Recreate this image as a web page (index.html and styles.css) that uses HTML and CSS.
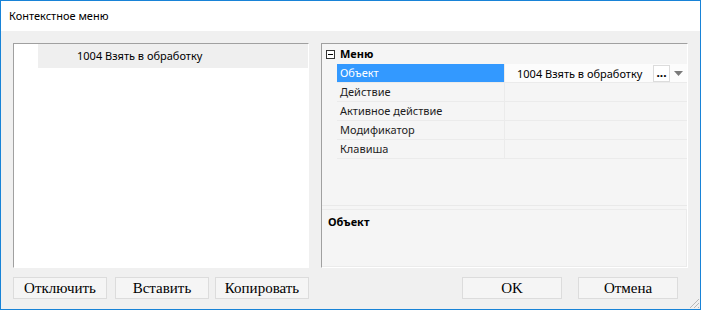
FILE: index.html
```html
<!DOCTYPE html>
<html lang="ru">
<head>
<meta charset="utf-8">
<title>Контекстное меню</title>
<link rel="stylesheet" href="styles.css">
</head>
<body>
<div class="window">
  <div class="titlebar">Контекстное меню</div>
  <div class="content">
    <div class="panels">
      <div class="listbox">
        <div class="list-item">1004 Взять в обработку</div>
      </div>
      <div class="propgrid">
        <div class="grid-rows">
          <div class="category">
            <span class="expander"><svg width="9" height="9" viewBox="0 0 9 9"><rect x="0.5" y="0.5" width="8" height="8" fill="#fff" stroke="#333"/><line x1="2" y1="4.5" x2="7" y2="4.5" stroke="#000"/></svg></span>
            <span class="cat-name">Меню</span>
          </div>
          <div class="prop selected">
            <div class="pname">Объект</div>
            <div class="pvalue">
              <span class="vtext">1004 Взять в обработку</span>
              <span class="ellipsis">...</span>
              <span class="drop"><svg width="9" height="5" viewBox="0 0 9 5"><polygon points="0,0 9,0 4.5,5" fill="#7a7a7a"/></svg></span>
            </div>
          </div>
          <div class="prop"><div class="pname">Действие</div><div class="pvalue"></div></div>
          <div class="prop"><div class="pname">Активное действие</div><div class="pvalue"></div></div>
          <div class="prop"><div class="pname">Модификатор</div><div class="pvalue"></div></div>
          <div class="prop"><div class="pname">Клавиша</div><div class="pvalue"></div></div>
        </div>
        <div class="description">
          <div class="desc-title">Объект</div>
        </div>
      </div>
    </div>
    <div class="buttons">
      <div class="btn-group left">
        <button class="btn b1">Отключить</button>
        <button class="btn b2">Вставить</button>
        <button class="btn b3">Копировать</button>
      </div>
      <div class="btn-group right">
        <button class="btn wide">OK</button>
        <button class="btn wide b5">Отмена</button>
      </div>
    </div>
    <div class="grip"><svg width="12" height="12" viewBox="0 0 12 12"><g fill="#b8b8b8"><rect x="10" y="2" width="1" height="1"/><rect x="9" y="3" width="1" height="1"/><rect x="8" y="4" width="1" height="1"/><rect x="7" y="5" width="1" height="1"/><rect x="6" y="6" width="1" height="1"/><rect x="5" y="7" width="1" height="1"/><rect x="4" y="8" width="1" height="1"/><rect x="3" y="9" width="1" height="1"/><rect x="2" y="10" width="1" height="1"/><rect x="10" y="6" width="1" height="1"/><rect x="9" y="7" width="1" height="1"/><rect x="8" y="8" width="1" height="1"/><rect x="7" y="9" width="1" height="1"/><rect x="6" y="10" width="1" height="1"/><rect x="10" y="10" width="1" height="1"/></g></svg></div>
  </div>
</div>
</body>
</html>
```
FILE: styles.css
```css
* { box-sizing: border-box; }
html, body { margin: 0; padding: 0; background: #fff; }
body {
  font-family: "Segoe UI", "Noto Sans", "Liberation Sans", sans-serif;
  font-size: 11px;
  color: #000;
}
.window {
  width: 701px;
  height: 310px;
  border: 1px solid #1883d7;
  display: flex;
  flex-direction: column;
  background: #f0f0f0;
}
.titlebar {
  height: 30px;
  background: #fff;
  padding-left: 8px;
  line-height: 30px;
  font-size: 11px;
  color: #000;
  flex: none;
}
.content {
  position: relative;
  flex: 1;
  padding: 12px 12px 0 12px;
  display: flex;
  flex-direction: column;
}
.panels {
  display: flex;
  gap: 12px;
  height: 225px;
}
.listbox {
  width: 296px;
  background: #fff;
  border-top: 1px solid #a0a0a0;
  border-left: 1px solid #a0a0a0;
  border-right: 1px solid #fff;
  border-bottom: 1px solid #fff;
}
.list-item {
  margin-left: 24px;
  height: 24px;
  background: #efefef;
  padding-left: 39px;
  line-height: 24px;
  white-space: nowrap;
}
.propgrid {
  width: 367px;
  background: #f5f5f5;
  border-top: 1px solid #a0a0a0;
  border-left: 1px solid #a0a0a0;
  border-right: 1px solid #fff;
  border-bottom: 1px solid #fff;
  display: flex;
  flex-direction: column;
}
.grid-rows {
  height: 162px;
  border-bottom: 1px solid #e9e9e9;
  flex: none;
}
.category {
  height: 20px;
  display: flex;
  align-items: center;
  padding-left: 4px;
  gap: 5px;
}
.expander { display: flex; }
.cat-name { font-weight: bold; line-height: 18px; }
.prop {
  display: flex;
  height: 19px;
  margin-left: 15px;
  border-bottom: 1px solid #ebebeb;
}
.pname {
  width: 168px;
  padding-left: 3px;
  line-height: 18px;
  border-right: 1px solid #ebebeb;
  color: #1e1e1e;
  white-space: nowrap;
}
.pvalue {
  flex: 1;
  display: flex;
  align-items: center;
  white-space: nowrap;
}
.prop.selected .pname {
  background: #3399ff;
  color: #fff;
}
.prop.selected .pvalue { background: #fcfcfc; }
.vtext { margin-left: 12px; flex: 1; }
.ellipsis {
  width: 17px;
  height: 17px;
  border: 1px solid #dcdcdc;
  background: #fff;
  font-weight: bold;
  font-size: 12px;
  line-height: 12px;
  display: flex;
  justify-content: center;
  align-items: flex-end;
  padding-bottom: 2px;
}
.drop {
  width: 17px;
  display: flex;
  justify-content: center;
  align-items: center;
}
.description {
  flex: 1;
  margin-top: 3px;
  border: 1px solid #ebebeb;
  border-left: none;
  padding: 4px 6px;
}
.desc-title { font-weight: bold; }
.buttons {
  display: flex;
  justify-content: space-between;
  margin-top: 9px;
}
.btn-group { display: flex; }
.btn {
  height: 22px;
  width: 94px;
  background: #f5f5f5;
  border: 1px solid #dcdcdc;
  font-family: "Liberation Serif", "Times New Roman", serif;
  font-size: 15px;
  color: #000;
  padding: 0;
  line-height: 20px;
}
.b2 { margin-left: 8px; }
.b3 { margin-left: 6px; }
.btn-group.right { margin-right: 10px; }
.btn.wide { width: 100px; }
.b5 { margin-left: 16px; }
.grip {
  position: absolute;
  right: 0;
  bottom: 0;
  width: 12px;
  height: 12px;
}
```
